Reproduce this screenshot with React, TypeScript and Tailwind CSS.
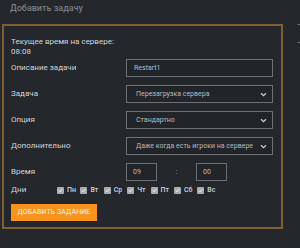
const DAYS = ["Пн", "Вт", "Ср", "Чт", "Пт", "Сб", "Вс"];

function Chevron() {
  return (
    <svg width="7" height="5" viewBox="0 0 7 5" className="shrink-0">
      <path d="M1 1.2 L3.5 3.6 L6 1.2" fill="none" stroke="#c9cbce" strokeWidth="1.3" />
    </svg>
  );
}

function Field({ label, children }: { label: string; children: React.ReactNode }) {
  return (
    <div className="flex items-center h-[18px]">
      <div className="w-[115px] text-[8px] text-[#d3d5d8]">{label}</div>
      {children}
    </div>
  );
}

function Select({ value }: { value: string }) {
  return (
    <div className="flex items-center justify-between w-[147px] h-[18px] border border-[#6c6f74] bg-[#212429] pl-[9px] pr-[5px] text-[7px] text-[#b9bbbe] whitespace-nowrap">
      <span>{value}</span>
      <Chevron />
    </div>
  );
}

function Check() {
  return (
    <span className="flex items-center justify-center w-[7px] h-[7px] bg-[#a9abae] rounded-[1px]">
      <svg width="5" height="5" viewBox="0 0 5 5">
        <path d="M0.8 2.6 L2 3.8 L4.2 1.2" fill="none" stroke="#ffffff" strokeWidth="0.9" />
      </svg>
    </span>
  );
}

export default function App() {
  return (
    <div
      className="relative w-[300px] h-[248px] overflow-hidden bg-[#24272c]"
      style={{ fontFamily: "Roboto, 'Open Sans', sans-serif" }}
    >
      <span className="absolute right-0 top-[24px] w-[3px] h-[1px] bg-[#5c5f64]" />
      <span className="absolute right-0 top-[42px] w-[3px] h-[1px] bg-[#5c5f64]" />
      <div className="pl-[10px] pt-[2px] h-[24px] text-[9px] leading-[12px] font-medium text-[#7a7d82]">
        Добавить задачу
      </div>
      <div className="ml-[2px] w-[281px] h-[205px] border-2 border-[#7e5f34] pl-[7px] pt-[11px]">
        <div className="text-[8px] leading-[10px] text-[#d3d5d8]">
          <div>Текущее время на сервере:</div>
          <div>08:08</div>
        </div>
        <div className="flex flex-col gap-[8px] mt-[2px]">
          <Field label="Описание задачи">
            <div className="flex items-center w-[147px] h-[18px] border border-[#6c6f74] bg-[#212429] pl-[7px] text-[7px] text-[#b9bbbe]">
              Restart1
            </div>
          </Field>
          <Field label="Задача">
            <Select value="Перезагрузка сервера" />
          </Field>
          <Field label="Опция">
            <Select value="Стандартно" />
          </Field>
          <Field label="Дополнительно">
            <Select value="Даже когда есть игроки на сервере" />
          </Field>
          <Field label="Время">
            <div className="flex items-center">
              <div className="flex items-center w-[31px] h-[18px] border border-[#6c6f74] bg-[#212429] pl-[6px] text-[7px] text-[#b9bbbe]">
                09
              </div>
              <span className="w-[39px] text-center text-[8px] text-[#9a9da1]">:</span>
              <div className="flex items-center w-[31px] h-[18px] border border-[#6c6f74] bg-[#212429] pl-[6px] text-[7px] text-[#b9bbbe]">
                00
              </div>
            </div>
          </Field>
        </div>
        <div className="flex items-center h-[10px] mt-[4px]">
          <div className="w-[46px] text-[8px] text-[#d3d5d8]">Дни</div>
          <div className="flex items-center">
            {DAYS.map((d) => (
              <div key={d} className="flex items-center w-[23.4px] gap-[3px]">
                <Check />
                <span className="text-[7px] font-medium text-[#d3d5d8]">{d}</span>
              </div>
            ))}
          </div>
        </div>
        <button className="mt-[9px] w-[86px] h-[17px] bg-[#f7931e] text-[7px] text-[#fff3e6] tracking-[0.1px]">
          ДОБАВИТЬ ЗАДАНИЕ
        </button>
      </div>
    </div>
  );
}
